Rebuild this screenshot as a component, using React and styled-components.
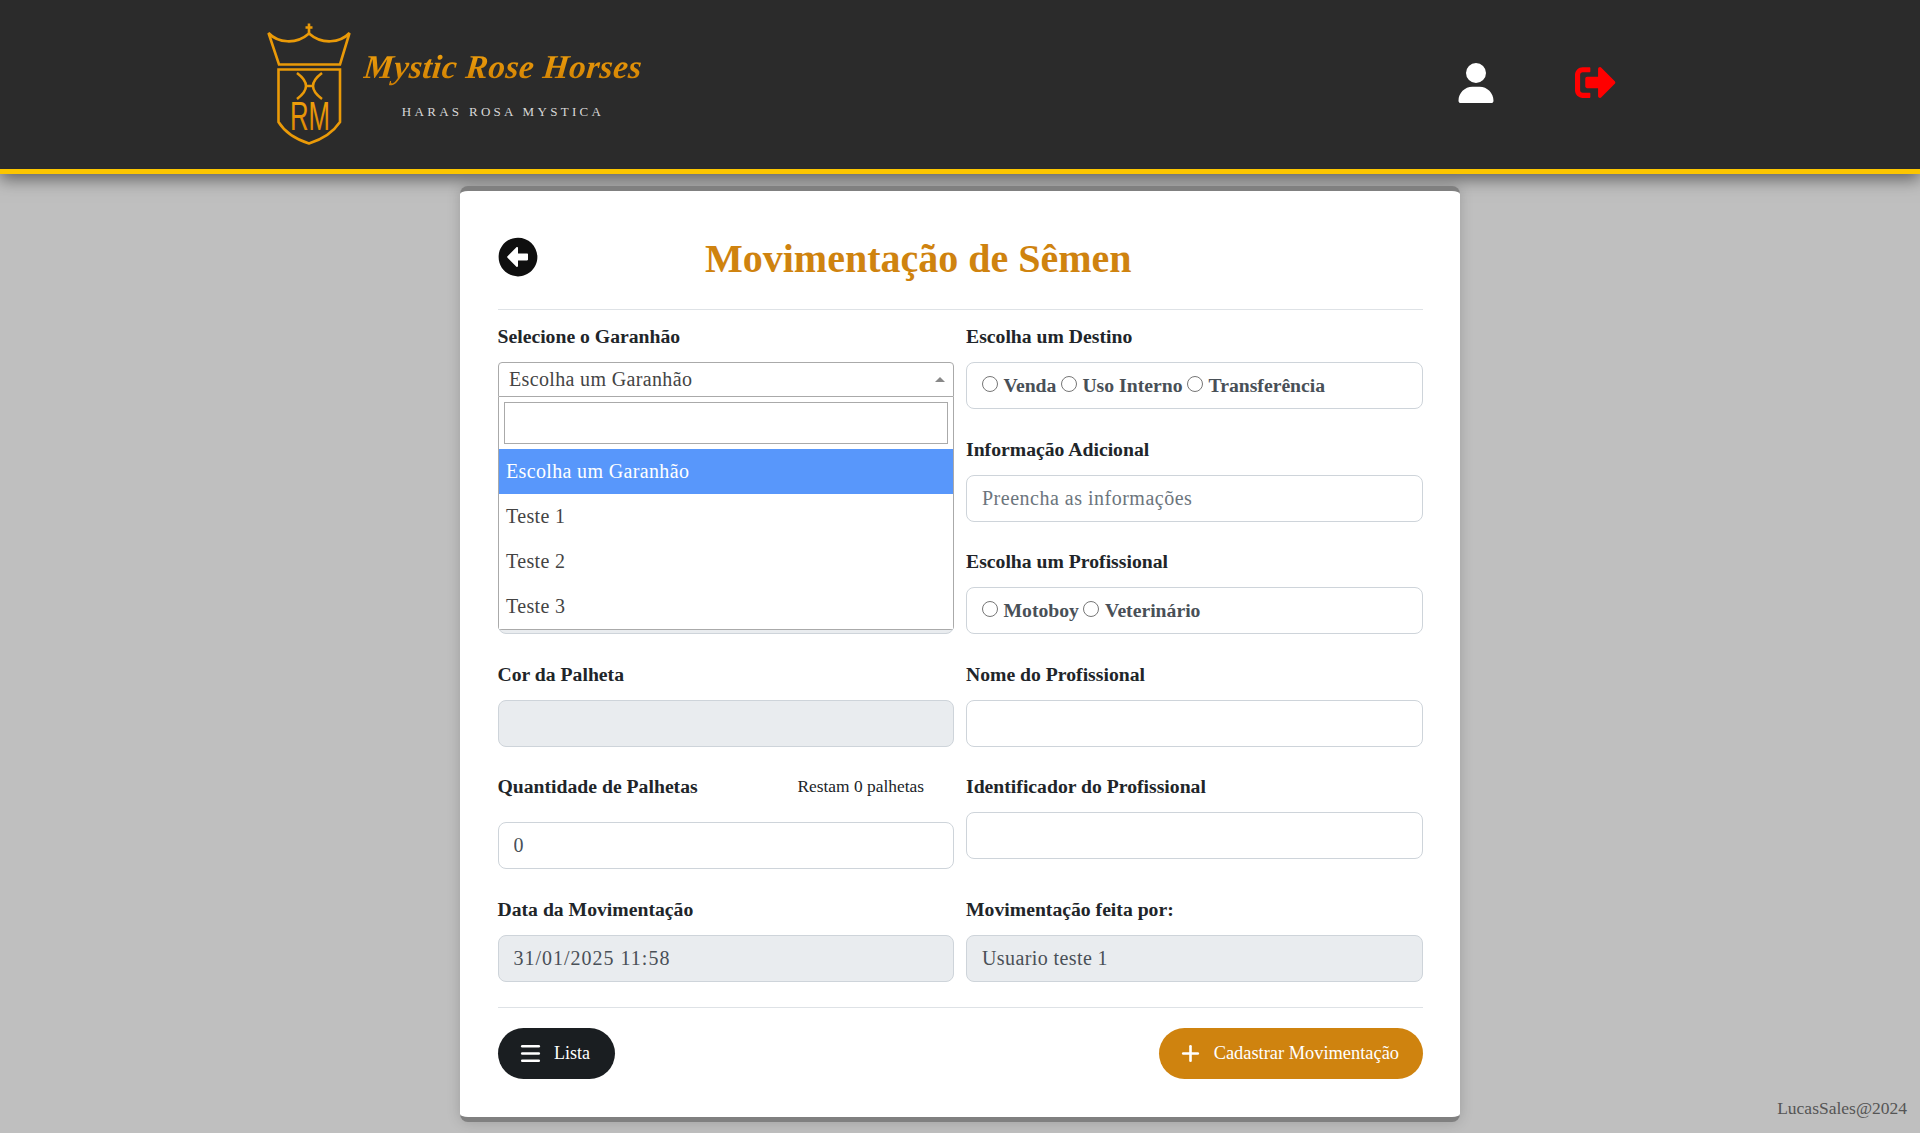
import React from "react";
import styled, { createGlobalStyle } from "styled-components";
import { FaSignOutAlt, FaArrowAltCircleLeft } from "react-icons/fa";
import { FaUser } from "react-icons/fa6";
import { Menu, Plus } from "lucide-react";

const Global = createGlobalStyle`
  * { box-sizing: border-box; }
  html, body { margin: 0; height: 100%; overflow: hidden; }
  body { background: #bfbfbf; font-family: "Liberation Serif", "Times New Roman", serif; }
`;
const Page = styled.div`
  min-height: 1133px;
  display: flex;
  flex-direction: column;
  align-items: center;
`;
const Header = styled.header`
  width: 100%;
  height: 174px;
  flex: none;
  background: #2b2b2b;
  border-bottom: 5px solid #fcc600;
  box-shadow: 0 5px 16px rgba(0, 0, 0, 0.5);
  display: flex;
  align-items: center;
  justify-content: space-between;
  padding: 0 304px 4px 266px;
`;
const Brand = styled.div`
  display: flex;
  align-items: center;
  gap: 12px;
`;
const BrandText = styled.div`
  display: flex;
  flex-direction: column;
  align-items: center;
  margin-top: -3px;
`;
const BrandName = styled.span`
  font-style: italic;
  font-weight: bold;
  font-size: 33.4px;
  line-height: 50px;
  letter-spacing: 0.4px;
  white-space: nowrap;
  background: linear-gradient(#f7a80f, #c87800);
  -webkit-background-clip: text;
  background-clip: text;
  color: transparent;
  transform: skewX(-6deg);
`;
const BrandSub = styled.span`
  font-size: 13px;
  letter-spacing: 3.3px;
  line-height: 16px;
  color: #d8d8d8;
  margin-top: 12px;
`;
const HeaderIcons = styled.div`
  display: flex;
  align-items: center;
  gap: 79px;
`;
const UserIcon = styled(FaUser)`
  color: #fff;
  font-size: 40px;
`;
const LogoutIcon = styled(FaSignOutAlt)`
  color: #f00;
  font-size: 41px;
`;
const Card = styled.main`
  width: 1000px;
  margin-top: 12px;
  background: #fff;
  border-top: 5px solid #808080;
  border-bottom: 5px solid #808080;
  border-radius: 8px;
  box-shadow: 0 0 14px rgba(0, 0, 0, 0.18);
  padding: 46px 37px 38px 37.5px;
`;
const TitleRow = styled.div`
  display: flex;
  align-items: flex-start;
  height: 73px;
  border-bottom: 1px solid #dee2e6;
`;
const BackIcon = styled(FaArrowAltCircleLeft)`
  font-size: 40px;
  color: #0f0f0f;
  flex: none;
`;
const Title = styled.h1`
  margin: 2px 0 0 167.5px;
  font-size: 40px;
  line-height: 40px;
  font-weight: bold;
  color: #cf830f;
  white-space: nowrap;
`;
const FormGrid = styled.div`
  display: grid;
  grid-template-columns: 456.5px 457px;
  column-gap: 12px;
  row-gap: 27.5px;
  margin-top: 14px;
`;
const Field = styled.div`
  position: relative;
  min-width: 0;
`;
const Label = styled.label`
  display: block;
  height: 24px;
  margin-bottom: 14px;
  font-size: 19.7px;
  line-height: 24.5px;
  font-weight: bold;
  color: #212529;
  white-space: nowrap;
`;
const LabelRow = styled.div`
  display: flex;
  justify-content: space-between;
  padding-right: 30px;
  margin-bottom: 24px;
  ${Label} { margin-bottom: 0; }
`;
const Remaining = styled.span`
  font-size: 17.4px;
  line-height: 24px;
  color: #212529;
`;
const Input = styled.input`
  display: block;
  width: 100%;
  height: 47px;
  padding: 0 15px;
  font: 20px "Liberation Serif", "Times New Roman", serif;
  letter-spacing: ${(p) => p.$tracking || "0.5px"};
  color: #495057;
  background: ${(p) => (p.disabled ? "#e9ecef" : "#fff")};
  border: 1px solid #ced4da;
  border-radius: 8px;
  outline: none;
  &::placeholder { color: #6c757d; opacity: 1; }
`;
const RadioBox = styled.div`
  display: flex;
  align-items: center;
  height: 47px;
  padding: 0 15px;
  background: #fff;
  border: 1px solid #ced4da;
  border-radius: 8px;
`;
const RadioLabel = styled.label`
  display: flex;
  align-items: center;
  gap: 5.5px;
  margin-right: 4.5px;
  font-size: 19.7px;
  font-weight: bold;
  color: #495057;
  white-space: nowrap;
`;
const Radio = styled.input.attrs({ type: "radio" })`
  width: 16px;
  height: 16px;
  margin: -4px 0 0;
`;
const SelectBox = styled.div`
  display: flex;
  align-items: center;
  justify-content: space-between;
  height: 35px;
  padding: 0 8px 0 10.5px;
  font-size: 20px;
  letter-spacing: 0.35px;
  color: #444;
  background: #fff;
  border: 1px solid #aaa;
  border-radius: 4px 4px 0 0;
`;
const Caret = styled.span`
  width: 0;
  height: 0;
  border-left: 5px solid transparent;
  border-right: 5px solid transparent;
  border-bottom: 5px solid #888;
`;
const Dropdown = styled.div`
  position: absolute;
  z-index: 5;
  left: 0.5px;
  right: 0;
  top: 73px;
  background: #fff;
  border: 1px solid #aaa;
  border-top: 0;
  border-radius: 0 0 4px 4px;
`;
const SearchWrap = styled.div`
  padding: 5px 5px 5px 5px;
`;
const Search = styled.input`
  display: block;
  width: 100%;
  height: 42px;
  border: 1px solid #aaa;
  outline: none;
  background: #fff;
`;
const Option = styled.div`
  height: 45px;
  display: flex;
  align-items: center;
  padding-left: 7px;
  font-size: 20px;
  letter-spacing: 0.35px;
  color: ${(p) => (p.$active ? "#fff" : "#444")};
  background: ${(p) => (p.$active ? "#5897fb" : "#fff")};
`;
const Footer = styled.div`
  display: flex;
  justify-content: space-between;
  margin-top: 25px;
  padding-top: 20px;
  border-top: 1px solid #dee2e6;
`;
const PillButton = styled.button`
  display: flex;
  align-items: center;
  height: 51px;
  gap: ${(p) => (p.$primary ? "11px" : "11.5px")};
  padding: 0 ${(p) => (p.$primary ? "24px" : "25px")} 0 ${(p) => (p.$primary ? "19px" : "20px")};
  border: 0;
  border-radius: 26px;
  font: ${(p) => (p.$primary ? "18.4px" : "18px")} "Liberation Serif", "Times New Roman", serif;
  color: #fff;
  background: ${(p) => (p.$primary ? "#cf830f" : "#1a1e21")};
`;
const Credit = styled.div`
  position: absolute;
  right: 13px;
  top: 1098px;
  font-size: 17.5px;
  line-height: 20px;
  color: #555;
`;

const Logo = () => (
  <svg width="86" height="126" viewBox="26 20 86 126" fill="none" aria-hidden="true">
    <defs>
      <linearGradient id="gold" x1="0" y1="0" x2="0" y2="1">
        <stop offset="0" stopColor="#f2a40c" />
        <stop offset="1" stopColor="#d98400" />
      </linearGradient>
    </defs>
    <g stroke="#ea9a08" strokeWidth="2.6" strokeLinejoin="miter">
      <path d="M28.5 33 C38 43 56 45 69 33.5 C82 45 100 43 109.5 33 L100 64.5 H39 Z" />
      <path d="M69 23.5 V33 M65.5 27.5 H72.5" strokeWidth="2.6" />
      <path d="M38.5 69.5 H100 V122 C92 134 80 140 69 143.5 C58 140 46 134 38.5 122 Z" />
      <path d="M57 73 C69 82 69 90 57 99 M82 73 C70 82 70 90 82 99 M66 86 H73" />
    </g>
    <text x="50" y="130" fontFamily="Liberation Sans, sans-serif" fontSize="40" fill="url(#gold)" textLength="40" lengthAdjust="spacingAndGlyphs">RM</text>
  </svg>
);

export default function App() {
  return (
    <Page>
      <Global />
      <Header>
        <Brand>
          <Logo />
          <BrandText>
            <BrandName>Mystic Rose Horses</BrandName>
            <BrandSub>HARAS ROSA MYSTICA</BrandSub>
          </BrandText>
        </Brand>
        <HeaderIcons>
          <UserIcon />
          <LogoutIcon />
        </HeaderIcons>
      </Header>
      <Card>
        <TitleRow>
          <BackIcon />
          <Title>Movimentação de Sêmen</Title>
        </TitleRow>
        <FormGrid>
          <Field>
            <Label>Selecione o Garanhão</Label>
            <SelectBox>
              Escolha um Garanhão
              <Caret />
            </SelectBox>
            <Dropdown>
              <SearchWrap>
                <Search />
              </SearchWrap>
              <Option $active>Escolha um Garanhão</Option>
              <Option>Teste 1</Option>
              <Option>Teste 2</Option>
              <Option>Teste 3</Option>
            </Dropdown>
          </Field>
          <Field>
            <Label>Escolha um Destino</Label>
            <RadioBox>
              <RadioLabel><Radio name="d" />Venda</RadioLabel>
              <RadioLabel><Radio name="d" />Uso Interno</RadioLabel>
              <RadioLabel><Radio name="d" />Transferência</RadioLabel>
            </RadioBox>
          </Field>
          <Field>
            <Label />
            <Input disabled />
          </Field>
          <Field>
            <Label>Informação Adicional</Label>
            <Input placeholder="Preencha as informações" />
          </Field>
          <Field>
            <Label />
            <Input disabled />
          </Field>
          <Field>
            <Label>Escolha um Profissional</Label>
            <RadioBox>
              <RadioLabel><Radio name="p" />Motoboy</RadioLabel>
              <RadioLabel><Radio name="p" />Veterinário</RadioLabel>
            </RadioBox>
          </Field>
          <Field>
            <Label>Cor da Palheta</Label>
            <Input disabled />
          </Field>
          <Field>
            <Label>Nome do Profissional</Label>
            <Input />
          </Field>
          <Field>
            <LabelRow>
              <Label>Quantidade de Palhetas</Label>
              <Remaining>Restam 0 palhetas</Remaining>
            </LabelRow>
            <Input defaultValue="0" />
          </Field>
          <Field>
            <Label>Identificador do Profissional</Label>
            <Input />
          </Field>
          <Field>
            <Label>Data da Movimentação</Label>
            <Input disabled defaultValue="31/01/2025 11:58" $tracking="1px" />
          </Field>
          <Field>
            <Label>Movimentação feita por:</Label>
            <Input disabled defaultValue="Usuario teste 1" $tracking="0.4px" />
          </Field>
        </FormGrid>
        <Footer>
          <PillButton>
            <Menu size={25} strokeWidth={2.3} />
            Lista
          </PillButton>
          <PillButton $primary>
            <Plus size={25} strokeWidth={2.5} />
            Cadastrar Movimentação
          </PillButton>
        </Footer>
      </Card>
      <Credit>LucasSales@2024</Credit>
    </Page>
  );
}
